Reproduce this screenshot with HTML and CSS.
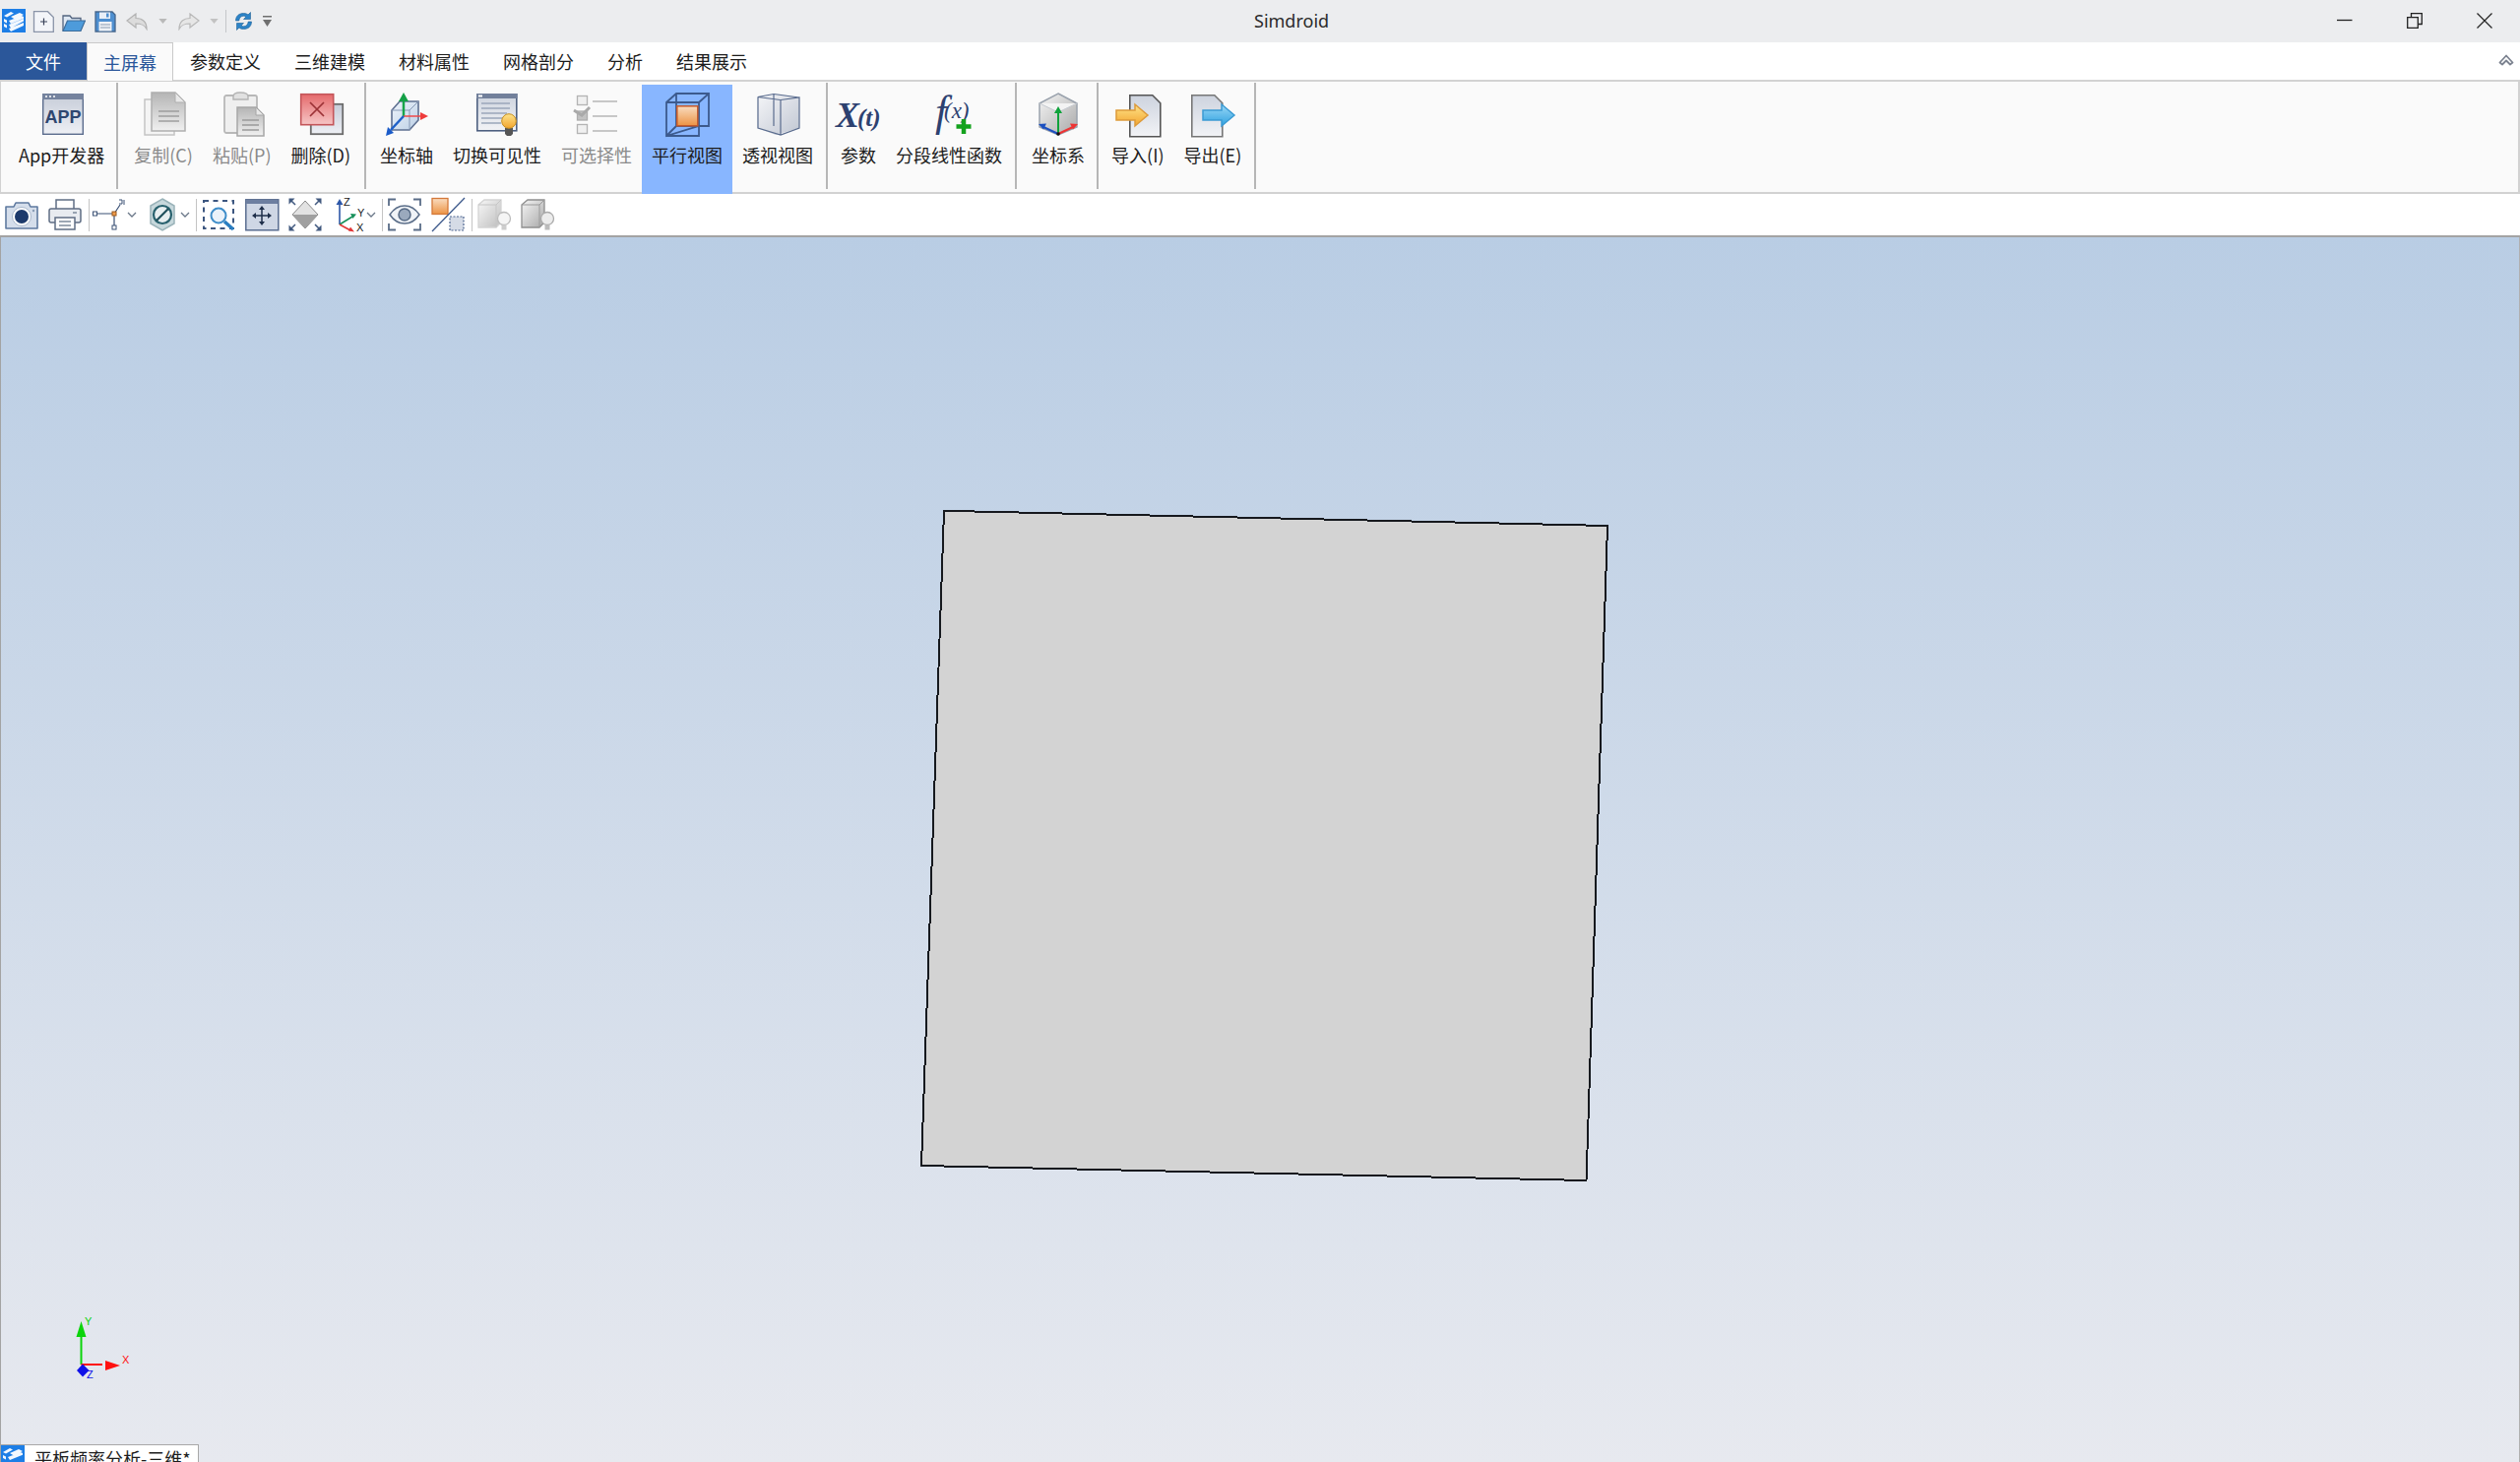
FILE: index.html
```html
<!DOCTYPE html>
<html lang="zh">
<head>
<meta charset="utf-8">
<title>Simdroid</title>
<link rel="stylesheet" href="styles.css">
</head>
<body>
<svg class="defs" width="0" height="0" aria-hidden="true">
  <defs>
    <linearGradient id="gGray" x1="0" y1="0" x2="0" y2="1"><stop offset="0" stop-color="#a9a9a9"/><stop offset="1" stop-color="#efefef"/></linearGradient>
    <linearGradient id="gPale" x1="0" y1="0" x2="0" y2="1"><stop offset="0" stop-color="#c6ccd8"/><stop offset="1" stop-color="#eef0f5"/></linearGradient>
    <linearGradient id="gBlue" x1="0" y1="0" x2="1" y2="1"><stop offset="0" stop-color="#eef4fb"/><stop offset="1" stop-color="#bcd0e6"/></linearGradient>
    <linearGradient id="gRed" x1="0" y1="0" x2="0" y2="1"><stop offset="0" stop-color="#e56a6c"/><stop offset="1" stop-color="#f6c5c5"/></linearGradient>
    <linearGradient id="gOrange" x1="0" y1="0" x2="0" y2="1"><stop offset="0" stop-color="#f9dcc0"/><stop offset="1" stop-color="#ec9344"/></linearGradient>
    <linearGradient id="gGlass" x1="0" y1="0" x2="1" y2="1"><stop offset="0" stop-color="#f4f5f8"/><stop offset="1" stop-color="#aeb6c6"/></linearGradient>
    <linearGradient id="gCube" x1="0" y1="0" x2="1" y2="1"><stop offset="0" stop-color="#f6f6f6"/><stop offset="1" stop-color="#a8a8a8"/></linearGradient>
    <linearGradient id="gYellow" x1="0" y1="0" x2="0" y2="1"><stop offset="0" stop-color="#fde38a"/><stop offset="1" stop-color="#f3a52e"/></linearGradient>
    <linearGradient id="gSky" x1="0" y1="0" x2="0" y2="1"><stop offset="0" stop-color="#9ad7f6"/><stop offset="1" stop-color="#2fa2e0"/></linearGradient>
    <linearGradient id="gDoc" x1="0" y1="0" x2="0" y2="1"><stop offset="0" stop-color="#cdd3de"/><stop offset="1" stop-color="#f2f3f6"/></linearGradient>
  </defs>
</svg>
<div class="app">
  <header class="titlebar">
    <div class="qat">
      <svg class="q q-logo" viewBox="0 0 24 24"><rect width="24" height="24" fill="#1d7ee6"/><path d="M2 7l7-4 3 1.500-7 4zM9 8l9-4 4 2-9 4.500zM2 10l3 1.500v3L2 13zM2 15l3 1.500v3L2 18zM7 12l13-5 2 1v1.800L9 15zM7 16l15-6v2.500L9 19.500zM7 20l15-6v3L9 23z" fill="#fff" opacity=".95"/></svg>
      <svg class="q q-new" viewBox="0 0 22 22"><path d="M1.500.7h14l5.800 5.800v14.800H1.500z" fill="#f3f5f9" stroke="#8a94a8" stroke-width="1.300"/><path d="M8 11h7M11.500 7.500v7" stroke="#39425a" stroke-width="1.200"/></svg>
      <svg class="q q-open" viewBox="0 0 24 20"><path d="M1 18V3h7l2 2.500h9V8" fill="#dfe8f3" stroke="#52647f" stroke-width="1.300"/><path d="M1 18.500L5.500 8H23.500L19 18.500z" fill="#4d9bdb" stroke="#3c6c9b" stroke-width="1.200"/></svg>
      <svg class="q q-save" viewBox="0 0 22 22"><path d="M1 1h17l3 3v17H1z" fill="#4e8fd0" stroke="#44658c" stroke-width="1.300"/><rect x="5" y="1.500" width="11" height="6.500" fill="#e8eff8"/><rect x="12" y="2.500" width="2.500" height="4" fill="#4e8fd0"/><rect x="4.500" y="11" width="13" height="9.500" fill="#eef1f6"/><path d="M6 14h10M6 17h10" stroke="#8d9bb0"/></svg>
      <svg class="q q-undo" viewBox="0 0 22 18"><path d="M1 8L10 1v4.500c6 0 11 3 11 11-2.500-4.500-5.500-5.500-11-5.500V15z" fill="#dcdcdc" stroke="#b3b3b3" stroke-width="1.200"/></svg>
      <svg class="q-tri" viewBox="0 0 10 6"><path d="M0 0h10L5 6z" fill="#b9b9b9"/></svg>
      <svg class="q q-redo" viewBox="0 0 22 18"><path d="M21 8L12 1v4.500C6 5.500 1 8.500 1 16.500 3.500 12 6.500 11 12 11V15z" fill="#e6e6e6" stroke="#b8b8b8" stroke-width="1.200"/></svg>
      <svg class="q-tri q-tri2" viewBox="0 0 10 6"><path d="M0 0h10L5 6z" fill="#c2c2c2"/></svg>
      <span class="q-sep"></span>
      <svg class="q q-sync" viewBox="0 0 19 21"><path d="M1.500 10C1.500 5 5 2.500 9.500 2.500c2 0 3.500.5 4.500 1.500L16.500 1.500V8.500H9.500L12 6c-.8-.6-1.600-.8-2.500-.8C7 5.200 5 7 4.800 10z" fill="#2c84c8" stroke="#1d5f95" stroke-width=".6"/><path d="M17.500 11c0 5-3.500 7.500-8 7.500-2 0-3.500-.5-4.500-1.500L2.500 19.500V12.500H9.500L7 15c.8.600 1.600.8 2.500.8 2.500 0 4.500-1.800 4.700-4.800z" fill="#2c84c8" stroke="#1d5f95" stroke-width=".6"/></svg>
      <svg class="q-more" viewBox="0 0 9 11"><path d="M0 0h9v1.500H0z" fill="#6f6f6f"/><path d="M0 4h9L4.500 11z" fill="#6f6f6f"/></svg>
    </div>
    <div class="app-title">Simdroid</div>
    <div class="win-buttons">
      <svg class="win-btn" viewBox="0 0 16 16"><path d="M0 7.500h15.500" stroke="#222" stroke-width="1.300"/></svg>
      <svg class="win-btn" viewBox="0 0 16 16"><path d="M.7 4.700h10.600v10.600H.7z" fill="none" stroke="#222" stroke-width="1.300"/><path d="M4.500 4.500V.7h10.800v10.800h-3.800" fill="none" stroke="#222" stroke-width="1.300"/></svg>
      <svg class="win-btn" viewBox="0 0 16 16"><path d="M.5.500l15 15M15.500.500l-15 15" stroke="#222" stroke-width="1.200"/></svg>
    </div>
  </header>

  <nav class="tabs">
    <div class="tab tab-file">文件</div>
    <div class="tab tab-active">主屏幕</div>
    <div class="tab">参数定义</div>
    <div class="tab">三维建模</div>
    <div class="tab">材料属性</div>
    <div class="tab">网格剖分</div>
    <div class="tab">分析</div>
    <div class="tab">结果展示</div>
    <svg class="collapse" viewBox="0 0 15 12"><path d="M1 8.500L7.500 1.500 14 8.500 11.500 10.500 7.500 6.500 3.500 10.500z" fill="#fff" stroke="#7c8390" stroke-width="1.800" stroke-linejoin="round"/></svg>
  </nav>

  <section class="ribbon">
    <div class="item">
      <svg class="ri" viewBox="0 0 48 48"><rect x="4.700" y="3.700" width="40.600" height="40.600" fill="url(#gPale)" stroke="#5b6c8d" stroke-width="1.400"/><rect x="4" y="3" width="42" height="6" fill="#75839e"/><path d="M7 6h2M11 6h2M15 6h2" stroke="#fff" stroke-width="1.500"/><text x="25" y="33" class="app-glyph">APP</text></svg>
      <span class="label">App开发器</span>
    </div>
    <span class="sep sep-a"></span>
    <div class="item off">
      <svg class="ri" viewBox="0 0 48 48"><path d="M5 9h30v36H5z" fill="#f4f4f4" stroke="#bcbcbc" stroke-width="1.500"/><path d="M12 2h24l10 10v29H12z" fill="url(#gGray)" stroke="#a3a3a3" stroke-width="1.500"/><path d="M36 2v10h10z" fill="#e5e5e5" stroke="#a3a3a3"/><path d="M19 21h21M19 26h21M19 31h21" stroke="#8f8f8f" stroke-width="1.500"/></svg>
      <span class="label">复制(C)</span>
    </div>
    <div class="item off">
      <svg class="ri" viewBox="0 0 48 48"><rect x="6" y="5" width="33" height="38" rx="2" fill="#eeeeee" stroke="#adadad" stroke-width="1.800"/><path d="M15 6c0-3 3-4 7-4s8 1 8 4v3H15z" fill="#ddd" stroke="#a8a8a8" stroke-width="1.400"/><path d="M19 17h19l8 8v21H19z" fill="url(#gGray)" stroke="#999" stroke-width="1.500"/><path d="M38 17v8h8z" fill="#e5e5e5" stroke="#999"/><path d="M24 30h17M24 35h17M24 40h17" stroke="#8a8a8a" stroke-width="1.400"/></svg>
      <span class="label">粘贴(P)</span>
    </div>
    <div class="item">
      <svg class="ri" viewBox="0 0 48 48"><rect x="13.800" y="13.800" width="32.400" height="30.400" fill="url(#gPale)" stroke="#6c6c6c" stroke-width="1.800"/><rect x="3.700" y="3.700" width="33" height="31" fill="url(#gRed)" stroke="#c4565a" stroke-width="1.600"/><path d="M13 12l14 14M27 12L13 26" stroke="#9b3236" stroke-width="1.700"/></svg>
      <span class="label">删除(D)</span>
    </div>
    <span class="sep sep-b"></span>
    <div class="item">
      <svg class="ri" viewBox="0 0 48 48"><path d="M9 20l8-9h19v19l-9 10H9z" fill="url(#gBlue)" stroke="#5e7091" stroke-width="1.600"/><path d="M9 20h18v20M27 20l9-9" fill="none" stroke="#8699b6" stroke-width="1"/><path d="M21 26V11" stroke="#18a54a" stroke-width="2.500"/><path d="M21 2l5 9H16z" fill="#14a047"/><path d="M21 26h17" stroke="#ef4848" stroke-width="1.500"/><path d="M46 26l-8 4v-8z" fill="#ee3b3b"/><path d="M21 26L8 40" stroke="#1e60c8" stroke-width="2.500"/><path d="M3 46l2-9 6 6z" fill="#1a5bc9"/></svg>
      <span class="label">坐标轴</span>
    </div>
    <div class="item">
      <svg class="ri" viewBox="0 0 48 48"><rect x="3.800" y="3.800" width="40" height="37" fill="url(#gDoc)" stroke="#4e6080" stroke-width="1.600"/><rect x="3" y="3" width="41.500" height="5" fill="#72809b"/><rect x="5" y="4.500" width="4" height="2" fill="#fff"/><path d="M8 13h29M8 18h29M8 23h26M8 28h22M8 33h20" stroke="#9aa6bb" stroke-width="1.400"/><path d="M32 38h8v6l-2 2h-4l-2-2z" fill="#555"/><circle cx="36" cy="31" r="7.300" fill="url(#gYellow)" stroke="#c78f1e" stroke-width="1"/></svg>
      <span class="label">切换可见性</span>
    </div>
    <div class="item off">
      <svg class="ri" viewBox="0 0 48 48"><rect x="4.500" y="5.500" width="10" height="9" fill="#efefef" stroke="#a8a8a8" stroke-width="1.300"/><rect x="4.500" y="21" width="10" height="9" fill="#b9b9b9" stroke="#a0a0a0" stroke-width="1.300"/><path d="M1 20l8 5 8-8" fill="none" stroke="#9b9b9b" stroke-width="3"/><rect x="4.500" y="34.500" width="10" height="9" fill="#efefef" stroke="#a8a8a8" stroke-width="1.300"/><path d="M20 11h25M20 26h25M20 41h25" stroke="#acacac" stroke-width="1.700"/></svg>
      <span class="label">可选择性</span>
    </div>
    <div class="item item-on">
      <svg class="ri" viewBox="0 0 48 48"><path d="M13 3h33v33H36L3 46V12zM3 12h33v34H3M36 12L46 3M3 46L13 36h33M13 3v33" fill="none" stroke="#3c5a8d" stroke-width="1.800"/><rect x="13.800" y="15.800" width="21" height="20" fill="url(#gOrange)" stroke="#c4592b" stroke-width="1.500"/></svg>
      <span class="label">平行视图</span>
    </div>
    <div class="item">
      <svg class="ri" viewBox="0 0 48 48"><path d="M3 7l19-4 24 4v31l-24 7L3 38z" fill="url(#gGlass)" opacity=".75"/><path d="M3.800 6.500L20 3.500 46 7M3.800 6.500l23 3M27 9.500L46 7v31L27 45 4 38V6.500M27 9.500V45M20 3.500V36" fill="none" stroke="#5a6c8e" stroke-width="1.200"/></svg>
      <span class="label">透视视图</span>
    </div>
    <span class="sep"></span>
    <div class="item">
      <svg class="ri" viewBox="0 0 48 48"><text x="1" y="37" class="fx-big">X</text><text x="23" y="36" class="fx-small">(t)</text></svg>
      <span class="label">参数</span>
    </div>
    <div class="item">
      <svg class="ri" viewBox="0 0 48 48"><text x="10" y="36" class="fx-f">f</text><text x="19" y="28" class="fx-x">(x)</text><path d="M39 29v15M31.500 36.500h15" stroke="#14a21d" stroke-width="4.500"/></svg>
      <span class="label">分段线性函数</span>
    </div>
    <span class="sep sep-c"></span>
    <div class="item">
      <svg class="ri" viewBox="0 0 48 48"><path d="M24 3L43 13v24L24 45 5 37V13z" fill="url(#gCube)" stroke="#9aa2ad" stroke-width="1.500"/><path d="M5 13l19 9 19-9" fill="#f3f3f3" stroke="#c5c9cf"/><path d="M24 44V21" stroke="#0fa23a" stroke-width="2"/><path d="M24 16l4 7h-8z" fill="#0fa23a"/><path d="M24 44l15-7" stroke="#e33" stroke-width="2"/><path d="M44 34l-8-.5 3 6z" fill="#e33"/><path d="M24 44L9 37" stroke="#1b4fc0" stroke-width="2"/><path d="M4 34l8-.5-3 6z" fill="#1b4fc0"/><circle cx="24" cy="44" r="1.800" fill="#111"/></svg>
      <span class="label">坐标系</span>
    </div>
    <span class="sep sep-d"></span>
    <div class="item">
      <svg class="ri" viewBox="0 0 48 48"><path d="M15.800 4.800h23l8 8v34h-31z" fill="url(#gDoc)" stroke="#555" stroke-width="1.600"/><path d="M2 20h19v-6l13 11-13 11v-6H2z" fill="url(#gYellow)" stroke="#dd9a3a" stroke-width="1.500"/></svg>
      <span class="label">导入(I)</span>
    </div>
    <div class="item">
      <svg class="ri" viewBox="0 0 48 48"><path d="M2.800 4.800h23l8 8v34h-31z" fill="url(#gDoc)" stroke="#777" stroke-width="1.600"/><path d="M14 20h19v-6l13 11-13 11v-6H14z" fill="url(#gSky)" stroke="#3b9bd4" stroke-width="1.500"/></svg>
      <span class="label">导出(E)</span>
    </div>
    <span class="sep"></span>
  </section>

  <div class="toolbar">
    <svg class="ti" viewBox="0 0 36 36"><path d="M2 10h8l2-4h13l2 4h7v22H2z" fill="#d5deeb" stroke="#5f7aa0" stroke-width="1.600" stroke-linejoin="round"/><circle cx="18" cy="20" r="9.500" fill="#fff" stroke="#a9b8cc"/><circle cx="18" cy="20" r="7" fill="#1d3a6b"/><circle cx="30" cy="14" r="1.200" fill="#8a9cb5"/></svg>
    <svg class="ti" viewBox="0 0 36 36"><rect x="9" y="3" width="18" height="10" fill="#fff" stroke="#5f6e84" stroke-width="1.500"/><rect x="2" y="12" width="32" height="14" rx="2" fill="#e8ebf0" stroke="#5f6e84" stroke-width="1.500"/><path d="M26 16h4" stroke="#7d8a9c" stroke-width="1.500"/><rect x="8" y="21" width="20" height="12" fill="#fff" stroke="#5f6e84" stroke-width="1.500"/><path d="M12 25h12M12 29h12" stroke="#7d8a9c" stroke-width="1.500"/></svg>
    <span class="tb-sep tb-sep-first"></span>
    <div class="drop">
      <svg class="ti" viewBox="0 0 36 36"><path d="M4 17h19V30M23 17L29 8" fill="none" stroke="#3a5075" stroke-width="1.200"/><rect x="1.500" y="15" width="4" height="4" fill="#fff" stroke="#3a5075"/><rect x="21" y="15" width="4" height="4" fill="#ef9b4b" stroke="#9a5a20"/><rect x="21" y="29" width="4" height="4" fill="#fff" stroke="#3a5075"/><path d="M28 3h3v4h-3M33 3v5" fill="none" stroke="#3a5075"/></svg>
      <svg class="chev" viewBox="0 0 10 6"><path d="M1 1l4 4 4-4" fill="none" stroke="#6a7788" stroke-width="1.300"/></svg>
    </div>
    <div class="drop">
      <svg class="ti" viewBox="0 0 36 36"><path d="M18 2l12 7v18l-12 7-12-7V9z" fill="#c7d8dc" stroke="#9ab3b9" stroke-width="1.500"/><circle cx="18" cy="18" r="9" fill="#e7eef0" stroke="#27606d" stroke-width="2.200"/><path d="M12 24l12-12" stroke="#1f4f5b" stroke-width="2.200"/></svg>
      <svg class="chev" viewBox="0 0 10 6"><path d="M1 1l4 4 4-4" fill="none" stroke="#6a7788" stroke-width="1.300"/></svg>
    </div>
    <span class="tb-sep"></span>
    <svg class="ti" viewBox="0 0 36 36"><rect x="3" y="4" width="30" height="28" fill="none" stroke="#3c5680" stroke-width="2" stroke-dasharray="5 4.500"/><circle cx="18" cy="19" r="7.500" fill="#eaf2fa" stroke="#3f8dc9" stroke-width="2"/><path d="M24 25l9 8" stroke="#2a7ec1" stroke-width="3.500"/></svg>
    <svg class="ti" viewBox="0 0 36 36"><rect x="1.800" y="2.800" width="33" height="31" fill="#cfd7e5" stroke="#5a6d90" stroke-width="1.500"/><rect x="2" y="3" width="32" height="4" fill="#6d7fa0"/><path d="M18 11v16M10 19h16" stroke="#1f2f4a" stroke-width="1.500"/><path d="M18 9l3 4h-6zM18 29l3-4h-6zM8 19l4-3v6zM28 19l-4-3v6z" fill="#1f2f4a"/></svg>
    <svg class="ti" viewBox="0 0 36 36"><path d="M18 4L31 18 18 32 5 18z" fill="#e2e2e2" stroke="#8a8a8a"/><path d="M5 18h26L18 32z" fill="#a0a0a0"/><path d="M3 3l5 5M33 3l-5 5M3 33l5-5M33 33l-5-5" stroke="#41597f" stroke-width="1.500"/><path d="M1.500 1.500h6l-6 6zM34.500 1.500h-6l6 6zM1.500 34.500h6l-6-6zM34.500 34.500h-6l6-6z" fill="#41597f"/></svg>
    <div class="drop">
      <svg class="ti" viewBox="0 0 36 36"><path d="M9 7v21" stroke="#2d57a8" stroke-width="1.600"/><path d="M9 2l3.500 6h-7z" fill="#2d57a8"/><path d="M9 28l13-8" stroke="#17905a" stroke-width="1.600"/><path d="M26 17.500l-6-.5 2.500 5z" fill="#17905a"/><path d="M9 28l11 6" stroke="#e23535" stroke-width="1.600"/><path d="M24 35.500l-6-1 2-4z" fill="#e23535"/><text x="13" y="9" class="axis-txt">Z</text><text x="27" y="20" class="axis-txt">Y</text><text x="26" y="35" class="axis-txt">X</text></svg>
      <svg class="chev" viewBox="0 0 10 6"><path d="M1 1l4 4 4-4" fill="none" stroke="#6a7788" stroke-width="1.300"/></svg>
    </div>
    <span class="tb-sep"></span>
    <svg class="ti" viewBox="0 0 36 36"><path d="M2 9V2.500h7M27 2.500h7V9M2 27v6.500h7M27 33.500h7V27" fill="none" stroke="#5a6d88" stroke-width="1.800"/><path d="M3 18c4-6 9-9 15-9s11 3 15 9c-4 6-9 9-15 9S7 24 3 18z" fill="#f0f3f7" stroke="#5a6d88" stroke-width="1.500"/><circle cx="18" cy="18" r="6" fill="#9aa9bd" stroke="#566a85" stroke-width="1.500"/></svg>
    <svg class="ti" viewBox="0 0 36 36"><rect x="2" y="1.500" width="16" height="16" fill="url(#gOrange)" stroke="#d4793a" stroke-width="1.300"/><rect x="20" y="20" width="14" height="14" fill="#d5dbe6" stroke="#4e6690" stroke-dasharray="2 1.500" stroke-width="1.200"/><path d="M2 35L35 1" stroke="#3e5a8c" stroke-width="1.300"/></svg>
    <span class="tb-sep"></span>
    <svg class="ti" viewBox="0 0 36 36"><path d="M2 8l6-5h17v23l-5 5H2z" fill="url(#gCube)" stroke="#c6c6c6" stroke-width="1.300" opacity=".75"/><path d="M2 8h18v23M20 8l5-5" fill="none" stroke="#c6c6c6"/><circle cx="28" cy="22" r="6.500" fill="#f5f5f5" stroke="#bcbcbc" stroke-width="1.300"/><path d="M25.500 28.500h5v5h-5z" fill="#cdcdcd"/></svg>
    <svg class="ti" viewBox="0 0 36 36"><path d="M2 8l6-5h17v23l-5 5H2z" fill="url(#gCube)" stroke="#8f8f8f" stroke-width="1.300"/><path d="M2 8h18v23M20 8l5-5" fill="none" stroke="#9a9a9a"/><circle cx="28" cy="22" r="6.500" fill="#ececec" stroke="#aaa" stroke-width="1.300"/><path d="M25.500 28.500h5v5h-5z" fill="#bcbcbc"/></svg>
  </div>

  <main class="viewport">
    <svg class="plate" viewBox="930 511 710 700"><polygon points="959,518.800 1633,534 1611.500,1199 936,1184" fill="#d3d3d3" stroke="#16191e" stroke-width="2"/></svg>
    <svg class="triad" viewBox="0 0 70 70">
      <path d="M22.500 46V16" stroke="#0bd40b" stroke-width="2"/>
      <path d="M22.500 2l5 16h-10z" fill="#0bd40b"/>
      <path d="M22.500 46H44" stroke="#ff1010" stroke-width="2"/>
      <path d="M62 47l-15-5v10z" fill="#ff1010"/>
      <path d="M24 45.500l6.500 6.500-6.500 6.500-6-6.500z" fill="#1010e8"/>
      <text x="26" y="6" class="tr-y">Y</text><text x="64" y="45" class="tr-x">X</text><text x="28" y="60" class="tr-z">Z</text>
    </svg>
    <div class="doc-tab">
      <svg class="doc-icon" viewBox="0 0 24 24"><rect width="24" height="24" fill="#1d7ee6"/><path d="M2 7l7-4 3 1.500-7 4zM9 8l9-4 4 2-9 4.500zM2 10l3 1.500v3L2 13zM7 12l13-5 2 1v1.800L9 15z" fill="#fff" opacity=".95"/></svg>
      <span class="doc-name">平板频率分析-三维*</span>
    </div>
  </main>
</div>
</body>
</html>
```
FILE: styles.css
```css
* { box-sizing: border-box; }
html, body { margin: 0; padding: 0; height: 100%; overflow: hidden; }
body {
  font-family: "Noto Sans CJK SC", "Noto Sans", sans-serif;
  font-size: 18px;
  color: #1c1c1c;
  background: #fff;
}
.defs { position: absolute; }
.app { display: flex; flex-direction: column; height: 1485px; }

/* title bar */
.titlebar {
  position: relative;
  height: 43px;
  flex: none;
  background: #ecedef;
  display: flex;
  align-items: center;
  padding-left: 2px;
}
.qat { display: flex; align-items: center; height: 43px; }
.q { display: block; flex: none; }
.q-logo { width: 24px; height: 24px; margin-top: -1px; }
.q-new { width: 22px; height: 22px; margin-left: 7px; }
.q-open { width: 24px; height: 20px; margin-left: 8px; margin-top: 2px; }
.q-save { width: 22px; height: 22px; margin-left: 9px; }
.q-undo { width: 22px; height: 18px; margin-left: 10px; }
.q-tri { width: 9px; height: 5px; margin-left: 11px; flex: none; }
.q-redo { width: 22px; height: 18px; margin-left: 11px; }
.q-tri2 { margin-left: 10px; }
.q-sep { width: 1px; height: 23px; background: #c4c6c9; margin-left: 7px; flex: none; }
.q-sync { width: 19px; height: 21px; margin-left: 8px; }
.q-more { width: 9px; height: 11px; margin-left: 10px; flex: none; }
.app-title {
  position: absolute;
  left: 1274px;
  top: 8px;
  font-family: "Noto Sans", sans-serif;
  font-size: 18px;
  line-height: 26px;
  color: #2b2b2b;
}
.win-buttons {
  margin-left: auto;
  display: flex;
  gap: 55px;
  padding-right: 28px;
  margin-top: -1px;
}
.win-btn { width: 16px; height: 16px; display: block; }

/* tabs */
.tabs {
  height: 38px;
  flex: none;
  display: flex;
  align-items: stretch;
  background: #fff;
  position: relative;
}
.tab {
  padding: 0 17px;
  line-height: 38px;
  height: 38px;
  color: #1c1c1c;
}
.tab-file {
  width: 88px;
  padding: 0 26px;
  background: #2b579a;
  color: #fff;
}
.tab-active {
  color: #2b579a;
  background: #fafafa;
  border: 1px solid #c9c9c9;
  border-bottom: none;
  padding: 0 16px;
  position: relative;
  z-index: 1;
  height: 39px;
  margin-bottom: -1px;
}
.collapse { position: absolute; right: 6px; top: 12px; width: 16px; height: 12px; }

/* ribbon */
.ribbon {
  height: 116px;
  flex: none;
  display: flex;
  align-items: stretch;
  background: #fafafa;
  border: 2px solid #d2d2d2;
  border-width: 2px 2px 2px 1px;
  padding-left: 8px;
}
.item {
  display: flex;
  flex-direction: column;
  align-items: center;
  padding: 7px 10px 0;
  margin-top: 3px;
  flex: none;
}
.item-on { background: #88b6ff; margin-bottom: -2px; }
.ri { width: 48px; height: 48px; display: block; flex: none; margin: -1px -10px 0; overflow: visible; }
.label { line-height: 24px; margin-top: 5px; white-space: nowrap; color: #1c1c1c; }
.off .label { color: #8a8a8a; }
.off .ri { opacity: .85; }
.sep {
  width: 2px;
  flex: none;
  background: #b6b6b6;
  margin: 1px 3px 3px 3px;
}
.sep-a { margin-left: 2px; margin-right: 6px; }
.sep-b { margin-left: 4px; margin-right: 4px; }
.sep-c { margin-right: 5px; }
.sep-d { margin-left: 2px; }

/* svg text glyphs */
.app-glyph { font: 700 18px "Liberation Sans", sans-serif; fill: #2f4770; text-anchor: middle; }
.fx-big { font: italic 700 36px "Liberation Serif", serif; fill: #2d4170; }
.fx-small { font: italic 700 25px "Liberation Serif", serif; fill: #2d4170; }
.fx-f { font: italic 400 44px "Liberation Serif", serif; fill: #2d4170; }
.fx-x { font: italic 400 23px "Liberation Serif", serif; fill: #2d4170; }
.axis-txt { font: 11px "Liberation Sans", sans-serif; fill: #222; }
.tr-y, .tr-x, .tr-z { font: 11px "Liberation Sans", sans-serif; }
.tr-y { fill: #0bd40b; } .tr-x { fill: #ff1010; } .tr-z { fill: #1010e8; }

/* secondary toolbar */
.toolbar {
  height: 42px;
  flex: none;
  display: flex;
  align-items: center;
  gap: 8px;
  padding-left: 4px;
  background: #fff;
}
.ti { width: 36px; height: 36px; display: block; flex: none; }
.drop { display: flex; align-items: center; flex: none; }
.chev { width: 10px; height: 6px; flex: none; }
.tb-sep {
  width: 1px;
  height: 33px;
  flex: none;
  background: #c4c4c4;
  margin: 0 -4px 0 -2px;
}
.tb-sep-first { margin-right: -6px; }

/* 3D viewport */
.viewport {
  flex: 1;
  position: relative;
  overflow: hidden;
  background: linear-gradient(180deg, #b9cde4 0%, #e7e9ef 100%);
  box-shadow: inset 1px 2px 0 #a3a3a3, inset -1px 0 0 #b0b0b0;
}
.plate { position: absolute; left: 930px; top: 272px; width: 710px; height: 700px; shape-rendering: crispEdges; }
.triad { position: absolute; left: 60px; top: 1101px; width: 70px; height: 70px; overflow: visible; }
.doc-tab {
  position: absolute;
  left: 1px;
  bottom: 0;
  width: 201px;
  height: 18px;
  background: #fff;
  border: 1px solid #a8a8a8;
  border-bottom: none;
  border-left: none;
  display: flex;
  overflow: hidden;
}
.doc-icon { width: 24px; height: 24px; flex: none; }
.doc-name { margin-left: 10px; line-height: 26px; white-space: nowrap; color: #1c1c1c; }
```
